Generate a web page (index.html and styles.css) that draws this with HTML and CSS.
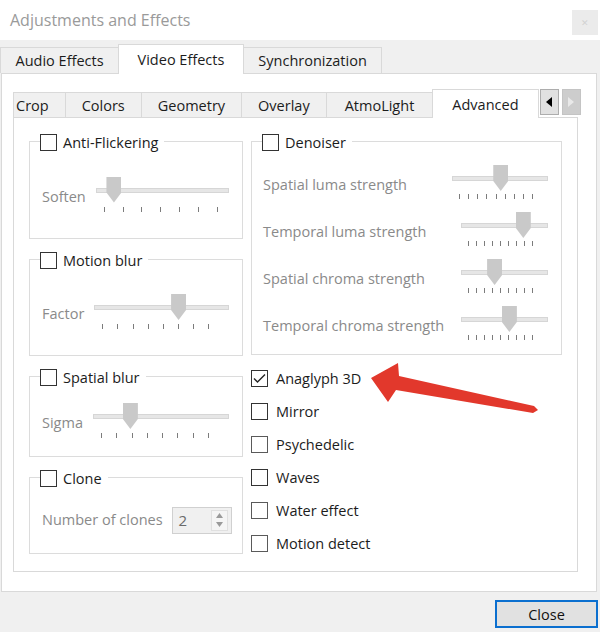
FILE: index.html
```html
<!DOCTYPE html>
<html lang="en">
<head>
    <meta charset="UTF-8">
    <title>Adjustments and Effects</title>
    <link rel="stylesheet" href="styles.css">
</head>
<body>
    <div class="window">
        <div class="titlebar">
            <span class="title">Adjustments and Effects</span>
            <span class="win-close">&#10005;</span>
        </div>

        <div class="main-tabs">
            <div class="tab">Audio Effects</div>
            <div class="tab active">Video Effects</div>
            <div class="tab">Synchronization</div>
        </div>

        <div class="pane">
            <div class="subbar">
                <div class="subtab first">Crop</div>
                <div class="subtab">Colors</div>
                <div class="subtab">Geometry</div>
                <div class="subtab">Overlay</div>
                <div class="subtab wider">AtmoLight</div>
                <div class="subtab active">Advanced</div>
                <div class="scroll">
                    <span class="scroll-btn">
                        <svg width="6" height="10" viewBox="0 0 6 10"><polygon points="6,0 6,10 0,5" fill="#000"/></svg>
                    </span>
                    <span class="scroll-btn disabled">
                        <svg width="6" height="10" viewBox="0 0 6 10"><polygon points="0,0 0,10 6,5" fill="#e9e9e9"/></svg>
                    </span>
                </div>
            </div>

            <div class="subpane">
                <div class="col-left">
                    <div class="group g-anti">
                        <div class="group-head"><span class="cb"></span>Anti-Flickering</div>
                        <div class="group-body">
                            <div class="field-row">
                                <span class="field-label">Soften</span>
                                <div class="slider">
                                    <span class="thumb" style="left: 8%"></span>
                                    <div class="track"></div>
                                    <div class="ticks t7"><i></i><i></i><i></i><i></i><i></i><i></i><i></i></div>
                                </div>
                            </div>
                        </div>
                    </div>

                    <div class="group g-motion">
                        <div class="group-head"><span class="cb"></span>Motion blur</div>
                        <div class="group-body">
                            <div class="field-row">
                                <span class="field-label">Factor</span>
                                <div class="slider">
                                    <span class="thumb" style="left: 57%"></span>
                                    <div class="track"></div>
                                    <div class="ticks t8"><i></i><i></i><i></i><i></i><i></i><i></i><i></i><i></i></div>
                                </div>
                            </div>
                        </div>
                    </div>

                    <div class="group g-spatial">
                        <div class="group-head"><span class="cb"></span>Spatial blur</div>
                        <div class="group-body">
                            <div class="field-row">
                                <span class="field-label">Sigma</span>
                                <div class="slider">
                                    <span class="thumb" style="left: 22%"></span>
                                    <div class="track"></div>
                                    <div class="ticks t8"><i></i><i></i><i></i><i></i><i></i><i></i><i></i><i></i></div>
                                </div>
                            </div>
                        </div>
                    </div>

                    <div class="group g-clone">
                        <div class="group-head"><span class="cb"></span>Clone</div>
                        <div class="group-body">
                            <div class="field-row centered">
                                <span class="field-label plain">Number of clones</span>
                                <div class="spin">
                                    <span class="spin-value">2</span>
                                    <span class="spin-btns">
                                        <svg width="7" height="5" viewBox="0 0 7 5"><polygon points="0,5 7,5 3.5,0" fill="#9a9a9a"/></svg>
                                        <svg width="7" height="5" viewBox="0 0 7 5"><polygon points="0,0 7,0 3.5,5" fill="#9a9a9a"/></svg>
                                    </span>
                                </div>
                            </div>
                        </div>
                    </div>
                </div>

                <div class="col-right">
                    <div class="group g-denoiser">
                        <div class="group-head"><span class="cb"></span>Denoiser</div>
                        <div class="denoise-rows">
                            <div class="denoise-row">
                                <span class="field-label">Spatial luma strength</span>
                                <div class="slider wide">
                                    <span class="thumb" style="left: 43%"></span>
                                    <div class="track"></div>
                                    <div class="ticks t9"><i></i><i></i><i></i><i></i><i></i><i></i><i></i><i></i><i></i></div>
                                </div>
                            </div>
                            <div class="denoise-row">
                                <span class="field-label">Temporal luma strength</span>
                                <div class="slider narrow">
                                    <span class="thumb" style="left: 63%"></span>
                                    <div class="track"></div>
                                    <div class="ticks t9"><i></i><i></i><i></i><i></i><i></i><i></i><i></i><i></i><i></i></div>
                                </div>
                            </div>
                            <div class="denoise-row">
                                <span class="field-label">Spatial chroma strength</span>
                                <div class="slider narrow">
                                    <span class="thumb" style="left: 30%"></span>
                                    <div class="track"></div>
                                    <div class="ticks t9"><i></i><i></i><i></i><i></i><i></i><i></i><i></i><i></i><i></i></div>
                                </div>
                            </div>
                            <div class="denoise-row">
                                <span class="field-label">Temporal chroma strength</span>
                                <div class="slider narrow">
                                    <span class="thumb" style="left: 47%"></span>
                                    <div class="track"></div>
                                    <div class="ticks t9"><i></i><i></i><i></i><i></i><i></i><i></i><i></i><i></i><i></i></div>
                                </div>
                            </div>
                        </div>
                    </div>

                    <div class="checks">
                        <div class="check">
                            <span class="cb checked">
                                <svg width="13" height="11" viewBox="0 0 13 11"><polyline points="1,5.5 4.5,9 12,1.5" fill="none" stroke="#222" stroke-width="1.4"/></svg>
                            </span>Anaglyph 3D
                        </div>
                        <div class="check"><span class="cb"></span>Mirror</div>
                        <div class="check"><span class="cb light"></span>Psychedelic</div>
                        <div class="check"><span class="cb"></span>Waves</div>
                        <div class="check"><span class="cb light"></span>Water effect</div>
                        <div class="check"><span class="cb light"></span>Motion detect</div>
                    </div>
                </div>
            </div>
        </div>

        <div class="footer">
            <button class="close-btn">Close</button>
        </div>

        <!-- annotation arrow drawn over the dialog -->
        <svg class="arrow" width="600" height="632" viewBox="0 0 600 632">
            <polygon points="371,378 398,363 399,376 534,406 538,410 533,413 396,390 388,402" fill="#e2382c"/>
        </svg>
    </div>
</body>
</html>
```

FILE: styles.css
```css
body {
    margin: 0;
    font-family: "Open Sans", "Noto Sans", sans-serif;
    font-size: 14.5px;
    color: #1c1c1c;
    background: #f0f0f0;
}
.window {
    position: relative;
    width: 600px;
    height: 632px;
    overflow: hidden;
    background: #f0f0f0;
}
.titlebar {
    height: 40px;
    background: #fff;
    display: flex;
    justify-content: space-between;
    align-items: flex-start;
    padding: 0 2px 0 10px;
    box-sizing: border-box;
}
.title {
    font-size: 16px;
    color: #9a9a9a;
    line-height: 40px;
}
.win-close {
    margin-top: 10px;
    width: 26px;
    height: 25px;
    background: #ebebeb;
    color: #d2d2d2;
    font-size: 9px;
    display: flex;
    align-items: center;
    justify-content: center;
}

/* top level tabs */
.main-tabs {
    height: 33px;
    display: flex;
    align-items: flex-end;
}
.tab {
    height: 26px;
    padding: 0 14.5px;
    border: 1px solid #d9d9d9;
    border-bottom: none;
    background: #f0f0f0;
    box-sizing: border-box;
    display: flex;
    align-items: center;
    margin-right: -1px;
}
.tab.active {
    height: 30px;
    margin-bottom: -1px;
    padding: 0 18.5px;
    background: #fff;
    position: relative;
    z-index: 1;
}
.pane {
    height: 519px;
    margin: 0 3px 0 1px;
    border: 1px solid #d9d9d9;
    background: #fff;
    box-sizing: border-box;
    padding: 15px 0 0 11px;
}

/* second level tabs */
.subbar {
    height: 28px;
    display: flex;
    align-items: flex-end;
}
.subtab {
    height: 25px;
    padding: 0 16px;
    border: 1px solid #d9d9d9;
    border-bottom: none;
    background: #f0f0f0;
    box-sizing: border-box;
    display: flex;
    align-items: center;
    margin-right: -1px;
}
.subtab.first {
    padding-left: 2px;
}
.subtab.wider {
    padding: 0 18px;
}
.subtab.active {
    height: 29px;
    margin-bottom: -1px;
    padding: 0 19px;
    background: #fff;
    position: relative;
    z-index: 1;
}
.scroll {
    align-self: flex-start;
    display: flex;
    gap: 3px;
    margin-left: 2px;
}
.scroll-btn {
    width: 19px;
    height: 26px;
    border: 1px solid #adadad;
    background: #e1e1e1;
    box-sizing: border-box;
    display: flex;
    align-items: center;
    justify-content: center;
}
.scroll-btn.disabled {
    border-color: #c4c4c4;
    background: #cdcdcd;
}
.subpane {
    width: 565px;
    height: 455px;
    border: 1px solid #d9d9d9;
    box-sizing: border-box;
    display: grid;
    grid-template-columns: 214px 311px;
    column-gap: 8px;
    align-items: start;
    padding: 23px 0 0 15px;
}

/* group boxes */
.group {
    border: 1px solid #dcdcdc;
    box-sizing: border-box;
    display: flex;
    flex-direction: column;
    margin-bottom: 20px;
}
.group-head {
    height: 18px;
    width: fit-content;
    margin: -9px 0 0 10px;
    padding-right: 6px;
    background: #fff;
    display: flex;
    align-items: center;
    gap: 6px;
}
.group-body {
    flex: 1;
    display: flex;
    align-items: center;
    padding: 0 13px 0 12px;
}
.field-row {
    flex: 1;
    display: flex;
    align-items: flex-start;
}
.field-row.centered {
    align-items: center;
}
.g-anti { height: 98px; }
.g-motion { height: 97px; }
.g-spatial { height: 81px; }
.g-clone { height: 77px; margin-bottom: 0; }
.g-denoiser { height: 214px; margin-bottom: 0; }

.cb {
    width: 17px;
    height: 17px;
    border: 1px solid #333;
    background: #fff;
    box-sizing: border-box;
    display: flex;
    align-items: center;
    justify-content: center;
    flex-shrink: 0;
}
.cb.light {
    border-color: #5a5a5a;
}
.field-label {
    color: #8a8a8a;
    line-height: 20px;
    margin-top: 10px;
    white-space: nowrap;
}
.field-label.plain {
    margin-top: 0;
}

/* sliders */
.slider {
    position: relative;
    flex: 1;
    height: 36px;
    margin-left: 10px;
}
.slider.wide {
    flex: none;
    width: 96px;
}
.slider.narrow {
    flex: none;
    width: 87px;
}
.track {
    margin-top: 11px;
    height: 5px;
    background: #e6e6e6;
    border: 1px solid #d6d6d6;
    box-sizing: border-box;
}
.thumb {
    position: absolute;
    top: 0;
    width: 15px;
    height: 26px;
    background: #c9c9c9;
    clip-path: polygon(0 0, 100% 0, 100% 62%, 50% 100%, 0 62%);
}
.ticks {
    display: flex;
    justify-content: space-between;
    margin-top: 14px;
    padding-left: 8px;
}
.ticks i {
    width: 1px;
    height: 5px;
    background: #7c7c7c;
}
.ticks.t7 { padding-right: 11px; }
.ticks.t8 { padding-right: 20px; }
.ticks.t9 { padding: 0 15px 0 7px; margin-top: 13px; }

/* spin box */
.spin {
    display: flex;
    align-items: center;
    width: 60px;
    height: 27px;
    margin-left: 9px;
    border: 1px solid #d0d0d0;
    background: #f0f0f0;
    box-sizing: border-box;
}
.spin-value {
    flex: 1;
    padding-left: 6px;
    color: #6a6a6a;
    font-size: 15px;
}
.spin-btns {
    width: 17px;
    height: 21px;
    margin-right: 3px;
    border: 1px solid #e0e0e0;
    background: #f5f5f5;
    box-sizing: border-box;
    display: flex;
    flex-direction: column;
    align-items: center;
    justify-content: space-around;
}

/* denoiser */
.denoise-rows {
    display: flex;
    flex-direction: column;
    gap: 13px;
    padding: 14px 13px 0 11px;
}
.denoise-row {
    display: flex;
    justify-content: space-between;
}
.denoise-row .slider {
    height: 34px;
}

/* plain checkbox list */
.checks {
    margin-top: 14px;
    display: flex;
    flex-direction: column;
    gap: 15px;
}
.check {
    height: 18px;
    display: flex;
    align-items: center;
    gap: 8px;
}

.footer {
    display: flex;
    justify-content: flex-end;
    padding: 8px 2px 0 0;
}
.close-btn {
    width: 103px;
    height: 28px;
    border: 2px solid #0b6fcf;
    background: #e1e1e1;
    font-family: "Open Sans", "Noto Sans", sans-serif;
    font-size: 14.5px;
    color: #111;
}
.arrow {
    position: absolute;
    top: 0;
    left: 0;
    pointer-events: none;
}
```
